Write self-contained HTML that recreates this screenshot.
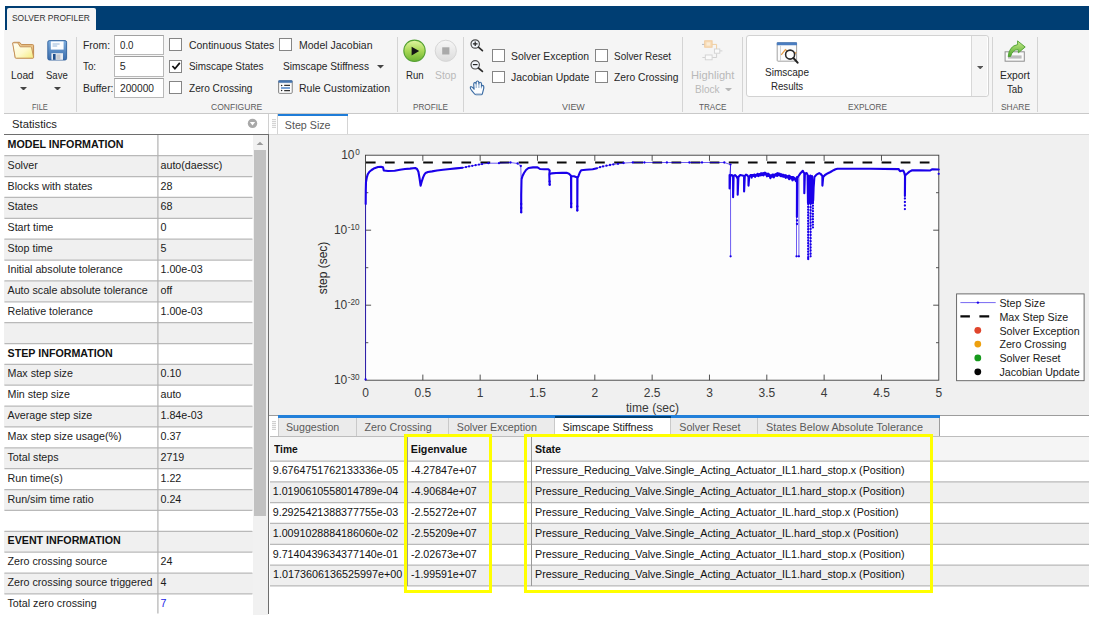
<!DOCTYPE html>
<html lang="en"><head><meta charset="utf-8"><title>Solver Profiler</title>
<style>
html,body{margin:0;padding:0;background:#fff;}
body{width:1096px;height:623px;overflow:hidden;position:relative;font-family:"Liberation Sans", sans-serif;}
.a{position:absolute;box-sizing:border-box;}
.t{position:absolute;white-space:nowrap;line-height:16px;height:16px;transform-origin:0 50%;}
.t sup{font-size:8.2px;line-height:0;position:relative;top:-4.7px;vertical-align:baseline;margin-left:0.6px;}
.cb{position:absolute;box-sizing:border-box;width:13.2px;height:12.8px;background:#fff;border:1px solid #858585;}
.inp{position:absolute;box-sizing:border-box;background:#fff;border:1px solid #b8b8b8;border-top-color:#a0a0a0;}
.vs{position:absolute;width:1px;background:#d4d4d4;top:37px;height:75px;}
.tab{position:absolute;box-sizing:border-box;top:418px;height:17px;background:#ebebeb;border-right:1px solid #c8c8c8;}
</style></head><body>
<div class="a" style="left:4.6px;top:6px;width:1084.4px;height:24px;background:#003e73"></div>
<div class="a" style="left:4px;top:30px;width:1085px;height:84px;background:#f5f5f5"></div>
<div class="a" style="left:7px;top:8px;width:89px;height:23px;background:#f5f5f5;border-radius:2px 2px 0 0"></div>
<div class="a" style="left:4px;top:113px;width:1085px;height:1px;background:#c9c9c9"></div>
<div class="vs" style="left:76.0px"></div>
<div class="vs" style="left:396.8px"></div>
<div class="vs" style="left:463.3px"></div>
<div class="vs" style="left:682.0px"></div>
<div class="vs" style="left:742.1px"></div>
<div class="vs" style="left:991.7px"></div>
<div class="vs" style="left:1036.7px"></div>
<div class="inp" style="left:113.8px;top:34.6px;width:50.6px;height:20.5px"></div>
<div class="inp" style="left:113.8px;top:56.1px;width:50.6px;height:20.5px"></div>
<div class="inp" style="left:113.8px;top:77.6px;width:50.6px;height:20.5px"></div>
<div class="cb" style="left:169.0px;top:38.4px"></div>
<div class="cb" style="left:169.0px;top:59.9px"></div>
<div class="cb" style="left:169.0px;top:81.2px"></div>
<div class="cb" style="left:279.0px;top:38.4px"></div>
<div class="cb" style="left:492.0px;top:48.9px"></div>
<div class="cb" style="left:492.0px;top:70.7px"></div>
<div class="cb" style="left:594.7px;top:48.9px"></div>
<div class="cb" style="left:594.7px;top:70.7px"></div>
<svg class="a" style="left:169.5px;top:60.3px" width="12" height="12" viewBox="0 0 12 12"><path d="M2.4 6.0 L4.9 8.7 L9.8 2.9" fill="none" stroke="#111" stroke-width="1.7"/></svg>
<div class="a" style="left:746px;top:35px;width:242.5px;height:61.5px;background:#fff;border:1px solid #d2d2d2;border-radius:3px"></div>
<div class="a" style="left:971.3px;top:36px;width:16.2px;height:59.5px;background:#f5f5f5;border-left:1px solid #d8d8d8;border-radius:0 3px 3px 0"></div>
<svg class="a" style="left:20.1px;top:86.8px" width="7" height="3.6" viewBox="0 0 7 3.6"><path d="M0 0 H7 L3.5 3.6 Z" fill="#444"/></svg>
<svg class="a" style="left:54.2px;top:86.8px" width="7" height="3.6" viewBox="0 0 7 3.6"><path d="M0 0 H7 L3.5 3.6 Z" fill="#444"/></svg>
<svg class="a" style="left:376.8px;top:65.0px" width="7" height="3.6" viewBox="0 0 7 3.6"><path d="M0 0 H7 L3.5 3.6 Z" fill="#444"/></svg>
<svg class="a" style="left:725.3px;top:87.5px" width="7" height="3.6" viewBox="0 0 7 3.6"><path d="M0 0 H7 L3.5 3.6 Z" fill="#b8b8b8"/></svg>
<svg class="a" style="left:976.8px;top:65.6px" width="6.5" height="3.4" viewBox="0 0 6.5 3.4"><path d="M0 0 H6.5 L3.25 3.4 Z" fill="#555"/></svg>
<div class="a" style="left:4px;top:114px;width:1085px;height:20px;background:#fff"></div>
<div class="a" style="left:268.3px;top:114px;width:1px;height:20px;background:#d0d0d0"></div>
<svg class="a" style="left:247px;top:118px" width="11" height="11" viewBox="0 0 11 11"><circle cx="5.5" cy="5.4" r="4.7" fill="#a9a9a9"/><path d="M2.9 3.9 H8.1 L5.5 7.6 Z" fill="#fff"/></svg>
<div class="a" style="left:269px;top:134px;width:820px;height:281.5px;background:#f0f0f0"></div>
<div class="a" style="left:269px;top:133.5px;width:820px;height:1px;background:#d9d9d9"></div>
<div class="a" style="left:277.3px;top:114px;width:71px;height:20px;background:#fff;border-left:1px solid #d4d4d4;border-right:1px solid #d4d4d4"></div>
<div class="a" style="left:278px;top:113.8px;width:70px;height:2.1px;background:#1e7cd8"></div>
<div class="a" style="left:272.3px;top:119.3px;width:3.4px;height:8.4px;background:repeating-linear-gradient(#d4d4d4 0 1px,#f6f6f6 1px 2px)"></div>
<div class="a" style="left:4px;top:134px;width:249px;height:480px;background:#fff"></div>
<div class="a" style="left:4px;top:155.37px;width:248.5px;height:20.87px;background:#f0f0f0"></div>
<div class="a" style="left:4px;top:197.11px;width:248.5px;height:20.87px;background:#f0f0f0"></div>
<div class="a" style="left:4px;top:238.85px;width:248.5px;height:20.87px;background:#f0f0f0"></div>
<div class="a" style="left:4px;top:280.59px;width:248.5px;height:20.87px;background:#f0f0f0"></div>
<div class="a" style="left:4px;top:322.33px;width:248.5px;height:20.87px;background:#f0f0f0"></div>
<div class="a" style="left:4px;top:364.07px;width:248.5px;height:20.87px;background:#f0f0f0"></div>
<div class="a" style="left:4px;top:405.81px;width:248.5px;height:20.87px;background:#f0f0f0"></div>
<div class="a" style="left:4px;top:447.55px;width:248.5px;height:20.87px;background:#f0f0f0"></div>
<div class="a" style="left:4px;top:489.29px;width:248.5px;height:20.87px;background:#f0f0f0"></div>
<div class="a" style="left:4px;top:531.03px;width:248.5px;height:20.87px;background:#f0f0f0"></div>
<div class="a" style="left:4px;top:572.77px;width:248.5px;height:20.87px;background:#f0f0f0"></div>
<svg class="a" style="left:0;top:0" width="270" height="623" viewBox="0 0 270 623"><path d="M4.4 155.67 H252.4 M4.4 176.54 H252.4 M4.4 197.41 H252.4 M4.4 218.28 H252.4 M4.4 239.15 H252.4 M4.4 260.02 H252.4 M4.4 280.89 H252.4 M4.4 301.76 H252.4 M4.4 322.63 H252.4 M4.4 343.50 H252.4 M4.4 364.37 H252.4 M4.4 385.24 H252.4 M4.4 406.11 H252.4 M4.4 426.98 H252.4 M4.4 447.85 H252.4 M4.4 468.72 H252.4 M4.4 489.59 H252.4 M4.4 510.46 H252.4 M4.4 531.33 H252.4 M4.4 552.20 H252.4 M4.4 573.07 H252.4 M4.4 593.94 H252.4" stroke="#b9b9b9" stroke-width="1.25" fill="none"/><path d="M157.9 134.5 V613.6" stroke="#b2b2b2" stroke-width="1.2" fill="none"/></svg>
<div class="a" style="left:253px;top:134.5px;width:15px;height:480px;background:#f1f1f1"></div>
<div class="a" style="left:254.3px;top:150.3px;width:12px;height:366px;background:#c1c1c1"></div>
<svg class="a" style="left:255px;top:139px" width="10" height="8" viewBox="0 0 10 8"><path d="M1.6 6 L5 2.8 L8.4 6 Z" fill="#9a9a9a"/></svg>
<div class="a" style="left:4px;top:134px;width:265px;height:1px;background:#6e6e6e"></div>
<div class="a" style="left:268px;top:134px;width:1.2px;height:480px;background:#6e6e6e"></div>
<div class="a" style="left:270px;top:415.5px;width:819px;height:20.5px;background:#fff"></div>
<div class="a" style="left:269px;top:414.6px;width:820px;height:1px;background:#9c9c9c"></div>
<div class="a" style="left:277.6px;top:415.4px;width:662.6px;height:2.5px;background:#2280da"></div>
<div class="a" style="left:277.6px;top:417.8px;width:79.4px;height:18px;background:#ebebeb;border-right:1px solid #c9c9c9;border-left:1px solid #c9c9c9;"></div>
<div class="a" style="left:357.0px;top:417.8px;width:92.0px;height:18px;background:#ebebeb;border-right:1px solid #c9c9c9;"></div>
<div class="a" style="left:449.0px;top:417.8px;width:106.0px;height:18px;background:#ebebeb;border-right:1px solid #c9c9c9;"></div>
<div class="a" style="left:555.0px;top:417.8px;width:116.0px;height:18px;background:#ffffff;border-right:1px solid #c9c9c9;"></div>
<div class="a" style="left:671.0px;top:417.8px;width:87.0px;height:18px;background:#ebebeb;border-right:1px solid #c9c9c9;"></div>
<div class="a" style="left:758.0px;top:417.8px;width:182.4px;height:18px;background:#ebebeb;border-right:1px solid #9c9c9c;"></div>
<div class="a" style="left:555px;top:415.5px;width:116px;height:2.6px;background:#003f73"></div>
<div class="a" style="left:272.3px;top:420.5px;width:3.4px;height:9px;background:repeating-linear-gradient(#d0d0d0 0 1px,#f4f4f4 1px 2px)"></div>
<div class="a" style="left:270px;top:436px;width:819px;height:178px;background:#fff"></div>
<div class="a" style="left:270px;top:436.5px;width:819px;height:25px;background:#f5f5f5"></div>
<div class="a" style="left:270px;top:481.65px;width:819px;height:20.80px;background:#efefef"></div>
<div class="a" style="left:270px;top:523.25px;width:819px;height:20.80px;background:#efefef"></div>
<div class="a" style="left:270px;top:564.85px;width:819px;height:20.80px;background:#efefef"></div>
<svg class="a" style="left:0;top:0" width="1096" height="623" viewBox="0 0 1096 623"><path d="M270 461.05 H1089 M270 481.85 H1089 M270 502.65 H1089 M270 523.45 H1089 M270 544.25 H1089 M270 565.05 H1089 M270 585.85 H1089" stroke="#b9b9b9" stroke-width="1.25" fill="none"/></svg>
<div class="a" style="left:270px;top:435.7px;width:819px;height:1.2px;background:#bdbdbd"></div>
<div class="a" style="left:407.3px;top:437px;width:1.2px;height:148.7px;background:#9a9a9a"></div>
<div class="a" style="left:531.0px;top:437px;width:1.2px;height:148.7px;background:#9a9a9a"></div>
<div class="a" style="left:403.9px;top:434.2px;width:88.4px;height:158.7px;border:3.7px solid #ffff00"></div>
<div class="a" style="left:524.0px;top:434.2px;width:408.6px;height:158.7px;border:3.7px solid #ffff00"></div>
<svg class="a" style="left:0;top:0" width="1096" height="623" viewBox="0 0 1096 623">
<rect x="365.5" y="155.2" width="573.3" height="225.0" fill="#fdfdfd"/>
<path d="M422.83 380.2 v-5.6 M422.83 155.2 v5.6 M480.16 380.2 v-5.6 M480.16 155.2 v5.6 M537.49 380.2 v-5.6 M537.49 155.2 v5.6 M594.82 380.2 v-5.6 M594.82 155.2 v5.6 M652.15 380.2 v-5.6 M652.15 155.2 v5.6 M709.48 380.2 v-5.6 M709.48 155.2 v5.6 M766.81 380.2 v-5.6 M766.81 155.2 v5.6 M824.14 380.2 v-5.6 M824.14 155.2 v5.6 M881.47 380.2 v-5.6 M881.47 155.2 v5.6 M365.5 192.70 h2.8 M938.8 192.70 h-2.8 M365.5 230.20 h5.6 M938.8 230.20 h-5.6 M365.5 267.70 h2.8 M938.8 267.70 h-2.8 M365.5 305.20 h5.6 M938.8 305.20 h-5.6 M365.5 342.70 h2.8 M938.8 342.70 h-2.8" stroke="#404040" stroke-width="0.9" fill="none"/>
<rect x="365.5" y="155.2" width="573.3" height="225.0" fill="none" stroke="#3c3c3c" stroke-width="0.9"/>
<path d="M365.9 162.5 H930.2" stroke="#0a0a0a" stroke-width="2.1" stroke-dasharray="9.7 9.4" fill="none"/>
<polyline points="365.6,380.0 365.6,204.0" fill="none" stroke="#1a00ea" stroke-width="0.8" stroke-opacity="0.8"/>
<polyline points="462.7,167.7 469.0,166.4 475.6,165.2 482.0,164.1 488.4,163.2 499.0,163.2 510.5,162.5 517.6,163.5 520.8,166.0 521.1,179.0" fill="none" stroke="#1a00ea" stroke-width="0.8" stroke-opacity="0.8"/>
<polyline points="597.0,168.2 603.0,166.4 613.3,164.4 620.0,163.6 626.0,162.9 632.8,162.5 724.3,162.5 730.5,164.6 730.6,256.3" fill="none" stroke="#1a00ea" stroke-width="0.8" stroke-opacity="0.8"/>
<polyline points="730.6,166.0 729.8,175.0" fill="none" stroke="#1a00ea" stroke-width="0.8" stroke-opacity="0.8"/>
<polyline points="796.5,180.8 796.5,256.3 798.9,256.3 798.9,177.0" fill="none" stroke="#1a00ea" stroke-width="0.8" stroke-opacity="0.8"/>
<polyline points="808.2,203.0 808.2,258.8" fill="none" stroke="#1a00ea" stroke-width="0.8" stroke-opacity="0.8"/>
<polyline points="810.6,203.0 810.6,256.3" fill="none" stroke="#1a00ea" stroke-width="0.8" stroke-opacity="0.8"/>
<polyline points="365.7,204.0 365.8,190.0 366.0,182.0 366.8,177.5 367.7,174.4 369.4,171.8 371.6,170.0 374.5,168.2 378.0,167.0 381.0,166.9 383.0,167.3 383.8,170.5 388.0,171.0 394.7,170.8 400.0,169.8 405.0,169.0 410.0,168.6 415.2,168.0 417.0,169.0 418.4,171.8 419.5,178.0 420.6,185.7 421.6,182.0 423.0,177.6 424.2,174.8 425.5,173.0 428.0,172.0 432.0,171.4 437.0,170.5 443.0,169.8 450.0,169.0 456.0,168.4 462.7,167.7" fill="none" stroke="#1a00ea" stroke-width="2.1" stroke-linejoin="round" stroke-linecap="round"/>
<polyline points="521.2,212.3 521.2,195.0 521.5,179.5 522.5,176.0 524.0,173.0 526.0,170.0 528.5,168.0 533.0,167.4 537.5,167.3 540.0,169.0 544.0,169.2 548.4,169.3 549.7,170.5 549.3,174.4 549.5,180.0 549.7,184.7 549.5,180.0 549.3,174.4 551.6,173.4 556.0,173.0 562.0,172.9 567.0,172.9 569.0,173.8 571.0,175.7 571.2,207.2 571.2,176.0 574.0,176.3 577.3,177.6 577.3,210.4 577.5,178.0 578.6,175.7 579.8,172.5 581.2,170.3 586.0,169.8 592.7,169.3 597.0,168.2" fill="none" stroke="#1a00ea" stroke-width="2.1" stroke-linejoin="round" stroke-linecap="round"/>
<polyline points="729.6,175.0 729.6,188.5 730.2,176.0 731.5,175.0 733.1,176.0 733.1,197.2 733.6,176.0 735.0,175.0 736.5,176.5 737.7,178.9 737.7,194.7 738.4,177.0 740.2,175.0 742.5,175.5 744.1,176.0 744.1,191.4 744.8,176.0 746.0,174.6 747.5,175.5 748.5,177.0 748.5,185.6 749.2,177.0 750.8,175.0 754.0,175.2 758.5,174.6 762.0,173.6 765.3,172.7 766.5,174.5 768.0,173.5 771.0,176.0 772.5,174.5 775.0,174.8 777.8,173.1 779.0,175.0 781.0,174.2 783.5,176.0 785.0,175.0 787.0,176.6 789.0,175.6 791.0,177.0 793.2,177.0 795.0,178.5 797.0,180.8 797.0,177.0 796.9,217.0 797.3,178.0 800.5,173.2 802.8,170.8 803.6,172.5 804.3,173.0 804.3,193.3 804.9,173.5 806.7,173.1 807.6,175.0 808.0,203.0 808.8,176.0 809.6,203.0 810.4,175.5 811.2,203.0 812.0,176.0 812.6,203.0 813.2,200.0 813.6,188.0 814.4,177.0 816.5,174.6 819.2,173.1 820.5,173.8 822.4,176.0 822.4,185.6 823.2,177.0 825.0,175.0 828.0,173.2 830.5,172.0 833.6,170.2 835.5,169.2 837.5,168.7 850.0,168.7 870.0,168.8 898.7,169.1 899.4,170.4 900.0,171.2 901.5,170.7 903.2,170.5 904.2,172.5 905.0,175.7 904.9,196.0 905.1,175.7 906.0,174.6 907.0,173.8 909.5,171.6 912.2,170.3 920.0,170.4 930.2,170.5 931.5,169.6 932.7,169.3 938.7,169.5" fill="none" stroke="#1a00ea" stroke-width="2.1" stroke-linejoin="round" stroke-linecap="round"/>
<polyline points="750.8,175.2 751.6,177.6 752.5,175.1 753.4,176.0 754.2,174.5 755.1,176.9 755.9,174.8 756.8,175.7 757.6,173.8 758.5,176.1 759.3,174.4 760.2,175.5 761.0,173.3 761.9,175.2 762.7,173.8 763.6,175.3 764.4,172.8 765.3,174.5 766.1,173.9 767.0,176.3 767.8,174.2 768.7,176.0 769.5,175.4 770.4,178.2 771.2,175.9 772.1,176.7 772.9,175.2 773.8,177.4 774.6,174.9 775.5,175.6 776.3,173.8 777.2,176.0 778.0,173.8 778.9,175.2 779.7,173.6 780.6,176.1 781.4,174.9 782.3,176.5 783.1,174.6 784.0,176.8 784.8,175.9 785.7,177.9 786.5,175.7 787.4,177.5 788.2,176.8 789.1,179.2 789.9,176.9 790.8,178.4 791.6,177.6 792.5,180.3 793.3,178.2 794.2,179.5 795.0,178.5 795.9,181.2" fill="none" stroke="#1a00ea" stroke-width="2.1" stroke-linejoin="round" stroke-linecap="round"/>
<path d="M808.2 204.0 V258.0" fill="none" stroke="#1a00ea" stroke-width="2.3" stroke-linecap="round" stroke-dasharray="0.1 2.7"/>
<path d="M810.6 204.0 V254.0" fill="none" stroke="#1a00ea" stroke-width="2.3" stroke-linecap="round" stroke-dasharray="0.1 3.0"/>
<path d="M812.9 203.0 V228.5" fill="none" stroke="#1a00ea" stroke-width="2.3" stroke-linecap="round" stroke-dasharray="0.1 2.6"/>
<circle cx="365.6" cy="379.4" r="1.15" fill="#1a00ea"/>
<circle cx="466.0" cy="167.1" r="1.15" fill="#1a00ea"/>
<circle cx="469.0" cy="166.4" r="1.15" fill="#1a00ea"/>
<circle cx="472.3" cy="165.8" r="1.15" fill="#1a00ea"/>
<circle cx="475.6" cy="165.2" r="1.15" fill="#1a00ea"/>
<circle cx="479.0" cy="164.6" r="1.15" fill="#1a00ea"/>
<circle cx="482.0" cy="164.1" r="1.15" fill="#1a00ea"/>
<circle cx="488.4" cy="163.2" r="1.15" fill="#1a00ea"/>
<circle cx="499.0" cy="163.2" r="1.15" fill="#1a00ea"/>
<circle cx="510.5" cy="162.5" r="1.15" fill="#1a00ea"/>
<circle cx="517.6" cy="163.5" r="1.15" fill="#1a00ea"/>
<circle cx="520.8" cy="166.0" r="1.15" fill="#1a00ea"/>
<circle cx="521.2" cy="212.3" r="1.15" fill="#1a00ea"/>
<circle cx="521.2" cy="208.0" r="1.15" fill="#1a00ea"/>
<circle cx="521.2" cy="204.0" r="1.15" fill="#1a00ea"/>
<circle cx="549.7" cy="184.7" r="1.15" fill="#1a00ea"/>
<circle cx="549.6" cy="181.5" r="1.15" fill="#1a00ea"/>
<circle cx="571.2" cy="207.2" r="1.15" fill="#1a00ea"/>
<circle cx="571.2" cy="203.5" r="1.15" fill="#1a00ea"/>
<circle cx="577.3" cy="210.4" r="1.15" fill="#1a00ea"/>
<circle cx="577.3" cy="206.5" r="1.15" fill="#1a00ea"/>
<circle cx="600.0" cy="167.2" r="1.15" fill="#1a00ea"/>
<circle cx="603.0" cy="166.4" r="1.15" fill="#1a00ea"/>
<circle cx="606.5" cy="165.7" r="1.15" fill="#1a00ea"/>
<circle cx="610.0" cy="165.0" r="1.15" fill="#1a00ea"/>
<circle cx="613.3" cy="164.4" r="1.15" fill="#1a00ea"/>
<circle cx="618.0" cy="163.8" r="1.15" fill="#1a00ea"/>
<circle cx="623.6" cy="163.0" r="1.15" fill="#1a00ea"/>
<circle cx="632.8" cy="162.5" r="1.15" fill="#1a00ea"/>
<circle cx="644.4" cy="162.5" r="1.15" fill="#1a00ea"/>
<circle cx="666.9" cy="162.5" r="1.15" fill="#1a00ea"/>
<circle cx="689.4" cy="162.5" r="1.15" fill="#1a00ea"/>
<circle cx="702.0" cy="162.5" r="1.15" fill="#1a00ea"/>
<circle cx="724.3" cy="162.5" r="1.15" fill="#1a00ea"/>
<circle cx="730.5" cy="164.6" r="1.15" fill="#1a00ea"/>
<circle cx="730.6" cy="256.3" r="1.15" fill="#1a00ea"/>
<circle cx="796.5" cy="256.3" r="1.15" fill="#1a00ea"/>
<circle cx="798.9" cy="256.3" r="1.15" fill="#1a00ea"/>
<circle cx="808.2" cy="259.0" r="1.15" fill="#1a00ea"/>
<circle cx="810.6" cy="256.3" r="1.15" fill="#1a00ea"/>
<circle cx="797.0" cy="220.5" r="1.15" fill="#1a00ea"/>
<circle cx="797.0" cy="224.0" r="1.15" fill="#1a00ea"/>
<circle cx="904.9" cy="209.1" r="1.15" fill="#1a00ea"/>
<circle cx="904.9" cy="205.5" r="1.15" fill="#1a00ea"/>
<circle cx="904.9" cy="202.0" r="1.15" fill="#1a00ea"/>
<circle cx="904.9" cy="198.5" r="1.15" fill="#1a00ea"/>
<circle cx="938.7" cy="173.8" r="1.15" fill="#1a00ea"/>
<rect x="956.6" y="293.9" width="127.5" height="86.8" fill="#fff" stroke="#5c5c5c" stroke-width="0.9"/>
<path d="M960.4 302.6 H995.7" stroke="#1a00ea" stroke-width="0.8" stroke-opacity="0.75"/>
<circle cx="977.9" cy="302.6" r="1.2" fill="#1a00ea"/>
<path d="M960.4 316.4 h9.5 M979.4 316.4 h9.8" stroke="#0a0a0a" stroke-width="2.3"/>
<circle cx="977.8" cy="330.3" r="3.4" fill="#e0452c"/>
<circle cx="977.8" cy="344.1" r="3.4" fill="#eda00f"/>
<circle cx="977.8" cy="357.9" r="3.4" fill="#169a1c"/>
<circle cx="977.8" cy="371.8" r="3.4" fill="#050505"/>
</svg>
<span class="a" style="left:323px;top:267.6px;width:0;height:0;"><span style="position:absolute;white-space:nowrap;font-size:12px;color:#262626;line-height:16px;transform:translate(-50%,-50%) rotate(-90deg);transform-origin:50% 50%;display:block">step (sec)</span></span>
<svg class="a" style="left:0;top:0" width="1096" height="120" viewBox="0 0 1096 120">
<defs>
<linearGradient id="gFold" x1="0" y1="0" x2="1" y2="1"><stop offset="0" stop-color="#fffef6"/><stop offset="0.55" stop-color="#fef9cc"/><stop offset="1" stop-color="#f4ec7c"/></linearGradient>
<linearGradient id="gSave" x1="0" y1="0" x2="0" y2="1"><stop offset="0" stop-color="#7cadde"/><stop offset="1" stop-color="#3a6cab"/></linearGradient>
<linearGradient id="gRun" x1="0" y1="0" x2="0" y2="1"><stop offset="0" stop-color="#e2f5a2"/><stop offset="0.5" stop-color="#a8d855"/><stop offset="1" stop-color="#6db232"/></linearGradient>
<linearGradient id="gStop" x1="0" y1="0" x2="0" y2="1"><stop offset="0" stop-color="#f7f7f7"/><stop offset="1" stop-color="#dcdcdc"/></linearGradient>
<linearGradient id="gExp" x1="0" y1="0" x2="0" y2="1"><stop offset="0" stop-color="#c9ec8a"/><stop offset="1" stop-color="#4ea62c"/></linearGradient>
</defs>
<path d="M13 43.2 Q13 42.3 14 42.3 H19.6 L21.6 44.6 H32.6 Q33.6 44.6 33.6 45.6 V57 Q33.6 58 32.6 58 H15.4 Z" fill="#e9c48c" stroke="#c08a4e" stroke-width="1"/>
<path d="M12.6 43 L15.2 57.4 Q15.4 58.2 16.3 58.2 H32.8 Q33.7 58.2 33.6 57.3 L31.6 47.6 Q31.4 46.8 30.5 46.8 H20.2 L18.3 43.6 Q17.9 42.8 17 42.8 H13.4 Q12.5 42.8 12.6 43 Z" fill="url(#gFold)" stroke="#c6935a" stroke-width="1"/>
<rect x="47.8" y="40.6" width="18.8" height="19.4" rx="1.6" fill="url(#gSave)" stroke="#2c5f9c" stroke-width="0.9"/>
<rect x="50.8" y="41.4" width="12.8" height="8.2" fill="#fbfdff"/>
<path d="M52.6 44 H59.6 M52.6 46 H57.2" stroke="#7fa4d0" stroke-width="0.8"/>
<rect x="51.4" y="53.2" width="11.6" height="6.6" fill="#e9edf2"/>
<rect x="53" y="54" width="2.6" height="5.8" fill="#1f4f8c"/>
<rect x="56.4" y="54.4" width="4" height="5.2" fill="#c5c9cf"/>
<rect x="278.5" y="80.6" width="13.8" height="12.8" rx="1.2" fill="#e4e4e4" stroke="#8e8e8e" stroke-width="1"/>
<rect x="279.7" y="83.4" width="11.5" height="9.2" fill="#fdfdfd"/>
<rect x="278.3" y="80.2" width="14.2" height="2.5" rx="0.8" fill="#4373ae"/>
<path d="M284.2 85.4 H290 M284.2 90.6 H290" stroke="#333" stroke-width="1.25"/>
<circle cx="281.6" cy="85.4" r="0.75" fill="#222"/><circle cx="281.6" cy="90.6" r="0.75" fill="#222"/>
<path d="M281 88 H290" stroke="#4d82c4" stroke-width="1.5"/>
<circle cx="414.5" cy="50.8" r="10.7" fill="url(#gRun)" stroke="#56a234" stroke-width="1.1"/>
<path d="M411.6 46.7 L419.2 51 L411.6 55.4 Z" fill="#151515"/>
<circle cx="445.8" cy="50.8" r="10.6" fill="url(#gStop)" stroke="#d6d6d6" stroke-width="1"/>
<rect x="442.2" y="47.3" width="7.2" height="7.2" fill="#a9a9a9"/>
<circle cx="475.2" cy="44.0" r="4.2" fill="#f1f5fa" stroke="#4a4a4a" stroke-width="1.15"/>
<path d="M478.4 47.2 L482.4 50.6" stroke="#2e2e2e" stroke-width="1.7" stroke-linecap="round"/>
<path d="M472.9 43.8 h4.6 M475.2 41.5 v4.6" stroke="#222" stroke-width="1.2"/>
<circle cx="475.2" cy="64.8" r="4.2" fill="#f1f5fa" stroke="#4a4a4a" stroke-width="1.15"/>
<path d="M478.4 68.0 L482.4 71.4" stroke="#2e2e2e" stroke-width="1.7" stroke-linecap="round"/>
<path d="M472.9 64.6 h4.6" stroke="#222" stroke-width="1.2"/>
<path d="M472.8 87.6 Q470.9 86 470.3 87.2 Q469.9 88.3 472 90.9 L474.6 94 Q475.2 94.7 476.2 94.7 H481 Q482.1 94.7 482.4 93.6 L483.7 88.6 Q484.2 85.6 482.7 85.3 Q481.7 85.3 481.5 86.6 L481.5 83.8 Q481.3 82.2 480 82.3 Q478.9 82.4 478.9 84 L478.8 82.4 Q478.6 80.9 477.3 81 Q476.1 81.1 476.1 82.7 L476.1 83.8 Q475.9 82.4 474.7 82.6 Q473.6 82.8 473.7 84.4 L474.1 89.2 Z" fill="#fbfdff" stroke="#3a6ba3" stroke-width="1.15" stroke-linejoin="round"/>
<path d="M476.2 83.6 V88 M478.9 83.6 V88 M481.4 86 V88.4" stroke="#6e93bd" stroke-width="0.8" fill="none"/>
<path d="M475.4 93.9 H481.6" stroke="#9db4cf" stroke-width="1" fill="none"/>
<path d="M716.6 53.6 v3.9 h-4.4 M719.8 50.9 h2.6 M702.4 57.5 h2.8" stroke="#d2d2d2" stroke-width="1" fill="none"/><path d="M702 44.4 h2.6" stroke="#b4b8c0" stroke-width="1" fill="none"/>
<path d="M712.2 44.4 h4.4 v4.8" stroke="#f0cfa2" stroke-width="1" fill="none"/>
<rect x="704.7" y="40.8" width="7.4" height="6.4" fill="#f8ddb9" stroke="#f0c898" stroke-width="0.9"/>
<rect x="706.6" y="42.4" width="3.6" height="3.2" fill="#fbecd6"/>
<rect x="714.4" y="49" width="5.4" height="4.2" fill="#fafafa" stroke="#d2d2d2" stroke-width="0.9"/>
<rect x="705.3" y="55" width="6.8" height="4.8" fill="#fafafa" stroke="#d2d2d2" stroke-width="0.9"/>
<rect x="777.2" y="42.6" width="19.4" height="18.6" rx="0.8" fill="#fcfcfc" stroke="#a2a2a2" stroke-width="1"/>
<rect x="776.8" y="42.2" width="20.2" height="3.1" rx="0.6" fill="#4a7dc0"/>
<path d="M780.5 45.6 V60.8" stroke="#cfcfcf" stroke-width="0.9"/>
<path d="M781.2 54.8 L785.4 49.6 L788.6 52.2 M794.6 54 L796.2 52.2" stroke="#e39a45" stroke-width="1.2" fill="none"/>
<circle cx="790.1" cy="54.6" r="4.5" fill="#fdfdfd" fill-opacity="0.93" stroke="#2a2a2a" stroke-width="1.55"/>
<path d="M793.5 58.1 L797.6 62.6" stroke="#222" stroke-width="2.1" stroke-linecap="round"/>
<rect x="1005.1" y="51.8" width="19.2" height="9.4" fill="#fafafa" stroke="#8f8f8f" stroke-width="1"/>
<rect x="1008" y="55.4" width="13.6" height="3.2" fill="#bdbdbd"/>
<path d="M1008.2 56.6 Q1009 46.2 1017.6 44.6 L1017.6 40.9 L1025.2 47 L1018.4 52.8 L1018.2 49.6 Q1012.4 49.8 1010.6 56.4 Z" fill="url(#gExp)" stroke="#4c9e30" stroke-width="0.9" stroke-linejoin="round"/>
</svg>
<span class="t" style="font-size:9.2px;color:#333;left:12.40px;top:10.11px;transform:scaleX(0.9143);">SOLVER PROFILER</span>
<span class="t" style="font-size:10.7px;color:#262626;left:11.30px;top:66.79px;transform:scaleX(0.9587);">Load</span>
<span class="t" style="font-size:10.7px;color:#262626;left:46.10px;top:66.79px;transform:scaleX(0.8903);">Save</span>
<span class="t" style="font-size:9.4px;color:#5c5c5c;left:31.60px;top:98.94px;transform:scaleX(0.7975);">FILE</span>
<span class="t" style="font-size:10.7px;color:#262626;left:82.50px;top:36.99px;transform:scaleX(0.9711);">From:</span>
<span class="t" style="font-size:10.7px;color:#262626;left:82.50px;top:58.39px;transform:scaleX(0.9183);">To:</span>
<span class="t" style="font-size:10.7px;color:#262626;left:82.50px;top:79.69px;transform:scaleX(0.9745);">Buffer:</span>
<span class="t" style="font-size:10.7px;color:#262626;left:119.70px;top:36.99px;transform:scaleX(0.9085);">0.0</span>
<span class="t" style="font-size:10.7px;color:#262626;left:119.70px;top:58.39px;">5</span>
<span class="t" style="font-size:10.7px;color:#262626;left:119.70px;top:79.69px;transform:scaleX(0.9531);">200000</span>
<span class="t" style="font-size:10.7px;color:#262626;left:188.50px;top:36.99px;transform:scaleX(0.9760);">Continuous States</span>
<span class="t" style="font-size:10.7px;color:#262626;left:188.50px;top:58.39px;transform:scaleX(0.9289);">Simscape States</span>
<span class="t" style="font-size:10.7px;color:#262626;left:188.50px;top:79.69px;transform:scaleX(0.9460);">Zero Crossing</span>
<span class="t" style="font-size:9.4px;color:#5c5c5c;left:211.25px;top:98.94px;transform:scaleX(0.9111);">CONFIGURE</span>
<span class="t" style="font-size:10.7px;color:#262626;left:298.80px;top:36.99px;transform:scaleX(0.9816);">Model Jacobian</span>
<span class="t" style="font-size:10.7px;color:#262626;left:283.00px;top:58.39px;transform:scaleX(0.9483);">Simscape Stiffness</span>
<span class="t" style="font-size:10.7px;color:#262626;left:298.80px;top:79.69px;transform:scaleX(0.9820);">Rule Customization</span>
<span class="t" style="font-size:10.7px;color:#262626;left:405.90px;top:66.79px;transform:scaleX(0.8975);">Run</span>
<span class="t" style="font-size:10.7px;color:#b9b9b9;left:434.80px;top:66.79px;transform:scaleX(0.9682);">Stop</span>
<span class="t" style="font-size:9.4px;color:#5c5c5c;left:413.00px;top:98.94px;transform:scaleX(0.8723);">PROFILE</span>
<span class="t" style="font-size:10.7px;color:#262626;left:511.00px;top:47.69px;transform:scaleX(0.9725);">Solver Exception</span>
<span class="t" style="font-size:10.7px;color:#262626;left:511.00px;top:68.99px;transform:scaleX(0.9773);">Jacobian Update</span>
<span class="t" style="font-size:10.7px;color:#262626;left:614.25px;top:47.69px;transform:scaleX(0.9316);">Solver Reset</span>
<span class="t" style="font-size:10.7px;color:#262626;left:614.25px;top:68.99px;transform:scaleX(0.9609);">Zero Crossing</span>
<span class="t" style="font-size:9.4px;color:#5c5c5c;left:562.40px;top:98.94px;transform:scaleX(0.9512);">VIEW</span>
<span class="t" style="font-size:10.7px;color:#b9b9b9;left:690.90px;top:66.79px;transform:scaleX(1.0434);">Highlight</span>
<span class="t" style="font-size:10.7px;color:#b9b9b9;left:695.00px;top:81.29px;transform:scaleX(0.9372);">Block</span>
<span class="t" style="font-size:9.4px;color:#5c5c5c;left:698.75px;top:98.94px;transform:scaleX(0.8653);">TRACE</span>
<span class="t" style="font-size:10.7px;color:#262626;left:765.20px;top:63.59px;transform:scaleX(0.9374);">Simscape</span>
<span class="t" style="font-size:10.7px;color:#262626;left:771.30px;top:77.69px;transform:scaleX(0.9035);">Results</span>
<span class="t" style="font-size:9.4px;color:#5c5c5c;left:848.00px;top:98.94px;transform:scaleX(0.8804);">EXPLORE</span>
<span class="t" style="font-size:10.7px;color:#262626;left:1000.10px;top:66.79px;transform:scaleX(0.9647);">Export</span>
<span class="t" style="font-size:10.7px;color:#262626;left:1007.40px;top:81.29px;transform:scaleX(0.9110);">Tab</span>
<span class="t" style="font-size:9.4px;color:#5c5c5c;left:1000.50px;top:98.94px;transform:scaleX(0.8975);">SHARE</span>
<span class="t" style="font-size:11.4px;color:#222;left:12.00px;top:116.05px;transform:scaleX(0.9873);">Statistics</span>
<span class="t" style="font-size:10.7px;color:#111;font-weight:bold;left:7.50px;top:135.84px;">MODEL INFORMATION</span>
<span class="t" style="font-size:10.7px;color:#222;left:7.50px;top:156.71px;">Solver</span>
<span class="t" style="font-size:10.7px;color:#1a1a1a;left:160.50px;top:156.71px;">auto(daessc)</span>
<span class="t" style="font-size:10.7px;color:#222;left:7.50px;top:177.58px;">Blocks with states</span>
<span class="t" style="font-size:10.7px;color:#1a1a1a;left:160.50px;top:177.58px;">28</span>
<span class="t" style="font-size:10.7px;color:#222;left:7.50px;top:198.45px;">States</span>
<span class="t" style="font-size:10.7px;color:#1a1a1a;left:160.50px;top:198.45px;">68</span>
<span class="t" style="font-size:10.7px;color:#222;left:7.50px;top:219.32px;">Start time</span>
<span class="t" style="font-size:10.7px;color:#1a1a1a;left:160.50px;top:219.32px;">0</span>
<span class="t" style="font-size:10.7px;color:#222;left:7.50px;top:240.19px;">Stop time</span>
<span class="t" style="font-size:10.7px;color:#1a1a1a;left:160.50px;top:240.19px;">5</span>
<span class="t" style="font-size:10.7px;color:#222;left:7.50px;top:261.06px;">Initial absolute tolerance</span>
<span class="t" style="font-size:10.7px;color:#1a1a1a;left:160.50px;top:261.06px;">1.00e-03</span>
<span class="t" style="font-size:10.7px;color:#222;left:7.50px;top:281.93px;">Auto scale absolute tolerance</span>
<span class="t" style="font-size:10.7px;color:#1a1a1a;left:160.50px;top:281.93px;">off</span>
<span class="t" style="font-size:10.7px;color:#222;left:7.50px;top:302.80px;">Relative tolerance</span>
<span class="t" style="font-size:10.7px;color:#1a1a1a;left:160.50px;top:302.80px;">1.00e-03</span>
<span class="t" style="font-size:10.7px;color:#111;font-weight:bold;left:7.50px;top:344.54px;">STEP INFORMATION</span>
<span class="t" style="font-size:10.7px;color:#222;left:7.50px;top:365.41px;">Max step size</span>
<span class="t" style="font-size:10.7px;color:#1a1a1a;left:160.50px;top:365.41px;">0.10</span>
<span class="t" style="font-size:10.7px;color:#222;left:7.50px;top:386.28px;">Min step size</span>
<span class="t" style="font-size:10.7px;color:#1a1a1a;left:160.50px;top:386.28px;">auto</span>
<span class="t" style="font-size:10.7px;color:#222;left:7.50px;top:407.15px;">Average step size</span>
<span class="t" style="font-size:10.7px;color:#1a1a1a;left:160.50px;top:407.15px;">1.84e-03</span>
<span class="t" style="font-size:10.7px;color:#222;left:7.50px;top:428.02px;">Max step size usage(%)</span>
<span class="t" style="font-size:10.7px;color:#1a1a1a;left:160.50px;top:428.02px;">0.37</span>
<span class="t" style="font-size:10.7px;color:#222;left:7.50px;top:448.89px;">Total steps</span>
<span class="t" style="font-size:10.7px;color:#1a1a1a;left:160.50px;top:448.89px;">2719</span>
<span class="t" style="font-size:10.7px;color:#222;left:7.50px;top:469.76px;">Run time(s)</span>
<span class="t" style="font-size:10.7px;color:#1a1a1a;left:160.50px;top:469.76px;">1.22</span>
<span class="t" style="font-size:10.7px;color:#222;left:7.50px;top:490.63px;">Run/sim time ratio</span>
<span class="t" style="font-size:10.7px;color:#1a1a1a;left:160.50px;top:490.63px;">0.24</span>
<span class="t" style="font-size:10.7px;color:#111;font-weight:bold;left:7.50px;top:532.37px;">EVENT INFORMATION</span>
<span class="t" style="font-size:10.7px;color:#222;left:7.50px;top:553.24px;">Zero crossing source</span>
<span class="t" style="font-size:10.7px;color:#1a1a1a;left:160.50px;top:553.24px;">24</span>
<span class="t" style="font-size:10.7px;color:#222;left:7.50px;top:574.11px;">Zero crossing source triggered</span>
<span class="t" style="font-size:10.7px;color:#1a1a1a;left:160.50px;top:574.11px;">4</span>
<span class="t" style="font-size:10.7px;color:#222;left:7.50px;top:594.98px;">Total zero crossing</span>
<span class="t" style="font-size:10.7px;color:#1c1ce8;left:160.50px;top:594.98px;">7</span>
<span class="t" style="font-size:10.7px;color:#555;left:284.80px;top:117.39px;">Step Size</span>
<span class="t" style="font-size:10.7px;color:#5a5a5a;left:285.50px;top:419.49px;transform:scaleX(0.9956);">Suggestion</span>
<span class="t" style="font-size:10.7px;color:#5a5a5a;left:364.50px;top:419.49px;">Zero Crossing</span>
<span class="t" style="font-size:10.7px;color:#5a5a5a;left:456.75px;top:419.49px;">Solver Exception</span>
<span class="t" style="font-size:10.7px;color:#222;left:562.50px;top:419.49px;">Simscape Stiffness</span>
<span class="t" style="font-size:10.7px;color:#5a5a5a;left:679.25px;top:419.49px;">Solver Reset</span>
<span class="t" style="font-size:10.7px;color:#5a5a5a;left:766.00px;top:419.49px;transform:scaleX(1.0098);">States Below Absolute Tolerance</span>
<span class="t" style="font-size:10.7px;color:#111;font-weight:bold;left:273.75px;top:441.29px;transform:scaleX(0.9590);">Time</span>
<span class="t" style="font-size:10.7px;color:#111;font-weight:bold;left:410.75px;top:441.29px;">Eigenvalue</span>
<span class="t" style="font-size:10.7px;color:#111;font-weight:bold;left:535.00px;top:441.29px;transform:scaleX(0.9946);">State</span>
<span class="t" style="font-size:10.7px;color:#111;left:272.75px;top:462.39px;">9.6764751762133336e-05</span>
<span class="t" style="font-size:10.7px;color:#111;left:410.75px;top:462.39px;transform:scaleX(0.9922);">-4.27847e+07</span>
<span class="t" style="font-size:10.7px;color:#111;left:535.00px;top:462.39px;transform:scaleX(1.0053);">Pressure_Reducing_Valve.Single_Acting_Actuator_IL1.hard_stop.x (Position)</span>
<span class="t" style="font-size:10.7px;color:#111;left:272.75px;top:483.19px;">1.0190610558014789e-04</span>
<span class="t" style="font-size:10.7px;color:#111;left:410.75px;top:483.19px;transform:scaleX(0.9922);">-4.90684e+07</span>
<span class="t" style="font-size:10.7px;color:#111;left:535.00px;top:483.19px;transform:scaleX(1.0053);">Pressure_Reducing_Valve.Single_Acting_Actuator_IL1.hard_stop.x (Position)</span>
<span class="t" style="font-size:10.7px;color:#111;left:272.75px;top:503.99px;">9.2925421388377755e-03</span>
<span class="t" style="font-size:10.7px;color:#111;left:410.75px;top:503.99px;transform:scaleX(0.9922);">-2.55272e+07</span>
<span class="t" style="font-size:10.7px;color:#111;left:535.00px;top:503.99px;transform:scaleX(1.0052);">Pressure_Reducing_Valve.Single_Acting_Actuator_IL.hard_stop.x (Position)</span>
<span class="t" style="font-size:10.7px;color:#111;left:272.75px;top:524.79px;">1.0091028884186060e-02</span>
<span class="t" style="font-size:10.7px;color:#111;left:410.75px;top:524.79px;transform:scaleX(0.9922);">-2.55209e+07</span>
<span class="t" style="font-size:10.7px;color:#111;left:535.00px;top:524.79px;transform:scaleX(1.0052);">Pressure_Reducing_Valve.Single_Acting_Actuator_IL.hard_stop.x (Position)</span>
<span class="t" style="font-size:10.7px;color:#111;left:272.75px;top:545.59px;">9.7140439634377140e-01</span>
<span class="t" style="font-size:10.7px;color:#111;left:410.75px;top:545.59px;transform:scaleX(0.9922);">-2.02673e+07</span>
<span class="t" style="font-size:10.7px;color:#111;left:535.00px;top:545.59px;transform:scaleX(1.0053);">Pressure_Reducing_Valve.Single_Acting_Actuator_IL1.hard_stop.x (Position)</span>
<span class="t" style="font-size:10.7px;color:#111;left:272.75px;top:566.39px;transform:scaleX(1.0090);">1.0173606136525997e+00</span>
<span class="t" style="font-size:10.7px;color:#111;left:410.75px;top:566.39px;transform:scaleX(0.9922);">-1.99591e+07</span>
<span class="t" style="font-size:10.7px;color:#111;left:535.00px;top:566.39px;transform:scaleX(1.0053);">Pressure_Reducing_Valve.Single_Acting_Actuator_IL1.hard_stop.x (Position)</span>
<span class="t" style="font-size:12px;color:#3a3a3a;left:362.16px;top:385.34px;">0</span>
<span class="t" style="font-size:12px;color:#3a3a3a;left:414.49px;top:385.34px;">0.5</span>
<span class="t" style="font-size:12px;color:#3a3a3a;left:476.82px;top:385.34px;">1</span>
<span class="t" style="font-size:12px;color:#3a3a3a;left:529.15px;top:385.34px;">1.5</span>
<span class="t" style="font-size:12px;color:#3a3a3a;left:591.48px;top:385.34px;">2</span>
<span class="t" style="font-size:12px;color:#3a3a3a;left:643.81px;top:385.34px;">2.5</span>
<span class="t" style="font-size:12px;color:#3a3a3a;left:706.14px;top:385.34px;">3</span>
<span class="t" style="font-size:12px;color:#3a3a3a;left:758.47px;top:385.34px;">3.5</span>
<span class="t" style="font-size:12px;color:#3a3a3a;left:820.80px;top:385.34px;">4</span>
<span class="t" style="font-size:12px;color:#3a3a3a;left:873.13px;top:385.34px;">4.5</span>
<span class="t" style="font-size:12px;color:#3a3a3a;left:935.46px;top:385.34px;">5</span>
<span class="t" style="font-size:12px;color:#3a3a3a;left:626.00px;top:400.24px;transform:scaleX(1.0062);">time (sec)</span>
<span class="t" style="font-size:12px;color:#3a3a3a;left:341.18px;top:147.24px;">10<sup>0</sup></span>
<span class="t" style="font-size:12px;color:#3a3a3a;left:333.90px;top:222.24px;">10<sup>-10</sup></span>
<span class="t" style="font-size:12px;color:#3a3a3a;left:333.90px;top:297.24px;">10<sup>-20</sup></span>
<span class="t" style="font-size:12px;color:#3a3a3a;left:333.90px;top:372.24px;">10<sup>-30</sup></span>
<span class="t" style="font-size:10.7px;color:#1a1a1a;left:999.40px;top:294.89px;">Step Size</span>
<span class="t" style="font-size:10.7px;color:#1a1a1a;left:999.40px;top:308.72px;">Max Step Size</span>
<span class="t" style="font-size:10.7px;color:#1a1a1a;left:999.40px;top:322.55px;">Solver Exception</span>
<span class="t" style="font-size:10.7px;color:#1a1a1a;left:999.40px;top:336.38px;">Zero Crossing</span>
<span class="t" style="font-size:10.7px;color:#1a1a1a;left:999.40px;top:350.21px;">Solver Reset</span>
<span class="t" style="font-size:10.7px;color:#1a1a1a;left:999.40px;top:364.04px;">Jacobian Update</span>
</body></html>
